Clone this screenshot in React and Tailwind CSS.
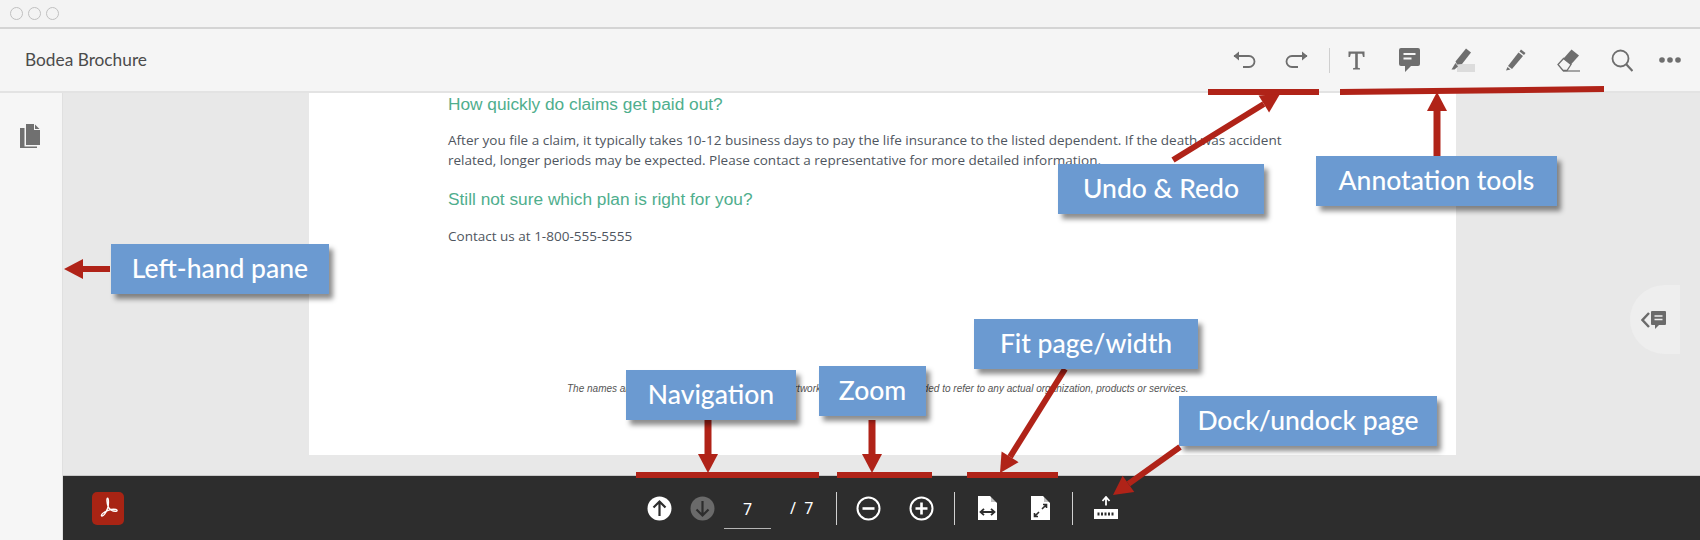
const Arrow = ({ x1, y1, x2, y2, w = 7, head = 19, half = 10 }) => {
  const len = Math.hypot(x2 - x1, y2 - y1)
  const ux = (x2 - x1) / len
  const uy = (y2 - y1) / len
  const bx = x2 - ux * head
  const by = y2 - uy * head
  const pts = [
    [x2, y2],
    [bx - uy * half, by + ux * half],
    [bx + uy * half, by - ux * half],
  ]
  return (
    <g>
      <line x1={x1} y1={y1} x2={bx} y2={by} stroke="#b02318" strokeWidth={w} />
      <polygon points={pts.map((p) => p.join(",")).join(" ")} fill="#b02318" />
    </g>
  )
}

const Label = ({ children, className }) => (
  <div className={"absolute flex h-[50px] items-center justify-center bg-[#6b9ad1] font-['Lato','Open_Sans',sans-serif] text-[26.500px] font-medium text-white shadow-[4px_5px_5px_rgba(0,0,0,0.45)] " + className}>
    {children}
  </div>
)

const Cell = ({ children, className = "w-[53px]" }) => (
  <div className={"flex items-center justify-center " + className}>{children}</div>
)

const Toolbar = () => (
  <div className="flex h-[64px] items-center justify-between border-b-2 border-[#e3e3e3] bg-[#f5f5f5] pl-[25px] pr-[9px]">
    <span className="font-['Lato',sans-serif] text-[17.300px] text-[#4b4b4b]">Bodea Brochure</span>
    <div className="flex items-center text-[#6e6e6e]">
      <Cell>
        <svg width="24" height="18" viewBox="0 0 24 18" fill="none" stroke="currentColor" strokeWidth="1.800">
          <path d="M2 5h15a5 5 0 0 1 0 11h-6" />
          <path d="M7 0.500 1.500 5 7 9.500z" fill="currentColor" stroke="none" />
        </svg>
      </Cell>
      <Cell>
        <svg width="24" height="18" viewBox="0 0 24 18" fill="none" stroke="currentColor" strokeWidth="1.800">
          <path d="M22 5H7a5 5 0 0 0 0 11h6" />
          <path d="M17 0.500 22.500 5 17 9.500z" fill="currentColor" stroke="none" />
        </svg>
      </Cell>
      <div className="ml-[6px] h-[25px] w-px bg-[#cfcfcf]" />
      <Cell>
        <svg width="17" height="19" viewBox="0 0 17 19" fill="currentColor">
          <path d="M0.500 0.500h16V6h-1.500l-.8-3.300H9.800v14l2.200.6v1.200H5v-1.200l2.200-.6v-14H2.800L2 6H.5z" />
        </svg>
      </Cell>
      <Cell>
        <svg width="21" height="24" viewBox="0 0 21 24">
          <path d="M2 0h17a2 2 0 0 1 2 2v14a2 2 0 0 1-2 2h-7l-6 6v-6H2a2 2 0 0 1-2-2V2a2 2 0 0 1 2-2z" fill="currentColor" />
          <path d="M4.500 6h12M4.500 10.500h8" stroke="#f5f5f5" strokeWidth="2" />
        </svg>
      </Cell>
      <Cell>
        <svg width="24" height="24" viewBox="0 0 24 24">
          <rect x="6" y="16" width="18" height="8" fill="#dcdcdc" />
          <path d="M15 0.500 20 4.500 11 16 6 16.500 4.500 13.500z" fill="currentColor" />
          <path d="M4.500 15 7 18.500 3.500 21.500H0.500z" fill="currentColor" />
        </svg>
      </Cell>
      <Cell>
        <svg width="21" height="22" viewBox="0 0 21 22">
          <path d="M16 0.500 20.500 4 19 6 14.500 2.500z" fill="currentColor" />
          <path d="M13.500 3.500 18 7 7 20 3 17z" fill="currentColor" />
          <path d="M2.500 18 5.500 20.500 1 21.500z" fill="currentColor" />
        </svg>
      </Cell>
      <Cell>
        <svg width="23" height="23" viewBox="0 0 23 23">
          <path d="M14.500 0.500 22 6.500 14 15.500 6.500 9.500z" fill="currentColor" />
          <path d="M6.500 9.500 1 15.500 6 21.500h4l4-6z" fill="none" stroke="currentColor" strokeWidth="1.300" />
          <path d="M6 22h17" stroke="currentColor" strokeWidth="1.200" />
        </svg>
      </Cell>
      <Cell>
        <svg width="22" height="23" viewBox="0 0 22 23" fill="none" stroke="currentColor">
          <circle cx="9.500" cy="9.500" r="8" strokeWidth="1.800" />
          <path d="M15 15l6.500 7" strokeWidth="2.200" />
        </svg>
      </Cell>
      <Cell className="w-[43px]">
        <svg width="22" height="6" viewBox="0 0 22 6" fill="currentColor">
          <circle cx="3" cy="3" r="2.800" />
          <circle cx="11" cy="3" r="2.800" />
          <circle cx="19" cy="3" r="2.800" />
        </svg>
      </Cell>
    </div>
  </div>
)

const PageBody = () => (
  <div className="ml-[246px] h-[362px] w-[1147px] bg-white pl-[139px] pt-px">
    <h2 className="font-['Liberation_Sans',sans-serif] text-[17.300px] leading-[20px] text-[#4fae8d]">How quickly do claims get paid out?</h2>
    <p className="mt-[16px] w-[850px] font-['Open_Sans',sans-serif] text-[13.530px] leading-[20px] text-[#4f5660]">
      After you file a claim, it typically takes 10-12 business days to pay the life insurance to the listed dependent. If the death was accident related, longer periods may be expected. Please contact a representative for more detailed information.
    </p>
    <h2 className="mt-[19px] font-['Liberation_Sans',sans-serif] text-[17.300px] leading-[20px] text-[#4fae8d]">Still not sure which plan is right for you?</h2>
    <p className="mt-[17px] font-['Open_Sans',sans-serif] text-[13.530px] leading-[20px] text-[#4f5660]">Contact us at 1-800-555-5555</p>
    <p className="ml-[119px] mt-[137px] font-['Liberation_Sans',sans-serif] text-[10px] italic leading-[12px] text-[#555555]">
      The names and logos of firms used in the sample artwork are invented, not intended to refer to any actual organization, products or services.
    </p>
  </div>
)

const CircleBtn = ({ children, className = "" }) => (
  <svg width="25" height="25" viewBox="0 0 25 25" className={className}>
    {children}
  </svg>
)

const BottomBar = () => (
  <div className="flex h-[65px] items-center border-t border-[#c8c8c8] bg-[#2d2d2d] pl-[29px] text-white">
    <div className="flex h-[33px] w-[32px] items-center justify-center rounded-[5px] bg-[#a82414]">
      <svg width="24" height="24" viewBox="0 0 32 32" fill="none" stroke="#ffffff" strokeWidth="1.800">
        <path d="M15.500 3c-1.500 0-1 6 .5 10.500s4 6.500 10 7c2.500.2 3-1.800.5-2.500-3.500-1-9.500.5-14.500 3-3.500 1.800-5.500 5-4.500 5.500 2.500 1.200 6-5 8-10 1.500-4 1.500-13.500 0-13.500z" />
      </svg>
    </div>
    <CircleBtn className="ml-[523px]">
      <circle cx="12.500" cy="12.500" r="12" fill="#ffffff" />
      <path d="M12.500 20V6M6.500 11.500l6-6 6 6" fill="none" stroke="#2d2d2d" strokeWidth="2.200" />
    </CircleBtn>
    <CircleBtn className="ml-[18px]">
      <circle cx="12.500" cy="12.500" r="12" fill="#6a6a6a" />
      <path d="M12.500 5v14M6.500 13.500l6 6 6-6" fill="none" stroke="#2d2d2d" strokeWidth="2.200" />
    </CircleBtn>
    <div className="ml-[9px] mt-[3px] flex h-[38px] w-[47px] items-center justify-center border-b border-[#b5b5b5] font-['Noto_Sans',sans-serif] text-[16px]">7</div>
    <span className="ml-[19px] whitespace-pre font-['Noto_Sans',sans-serif] text-[16px]">/  7</span>
    <div className="ml-[23px] h-[33px] w-px bg-[#d0d0d0]" />
    <CircleBtn className="ml-[19px]">
      <circle cx="12.500" cy="12.500" r="11" fill="none" stroke="#ffffff" strokeWidth="2" />
      <path d="M6.500 12.500h12" stroke="#ffffff" strokeWidth="2.600" />
    </CircleBtn>
    <CircleBtn className="ml-[28px]">
      <circle cx="12.500" cy="12.500" r="11" fill="none" stroke="#ffffff" strokeWidth="2" />
      <path d="M6.500 12.500h12M12.500 6.500v12" stroke="#ffffff" strokeWidth="2.600" />
    </CircleBtn>
    <div className="ml-[20px] h-[33px] w-px bg-[#d0d0d0]" />
    <svg width="19" height="24" viewBox="0 0 19 24" className="ml-[23px]">
      <path d="M0 0h12l7 7v17H0z" fill="#ffffff" />
      <path d="M13 0l6 6h-6z" fill="#2d2d2d" opacity="0.3" />
      <path d="M2.500 16h14M6 12.800 2.500 16 6 19.200M13 12.800l3.500 3.200-3.500 3.200" fill="none" stroke="#2d2d2d" strokeWidth="1.800" />
    </svg>
    <svg width="19" height="24" viewBox="0 0 19 24" className="ml-[34px]">
      <path d="M0 0h12l7 7v17H0z" fill="#ffffff" />
      <path d="M13 0l6 6h-6z" fill="#2d2d2d" opacity="0.3" />
      <path d="M3.500 20.500 8 16M3.500 17v3.500H7M11 13l4.500-4.500M12 8.500h3.500V12" fill="none" stroke="#2d2d2d" strokeWidth="1.600" />
    </svg>
    <div className="ml-[22px] h-[33px] w-px bg-[#d0d0d0]" />
    <svg width="24" height="24" viewBox="0 0 24 24" className="ml-[21px]">
      <path d="M12 9.500V2M8.500 5 12 1l3.500 4" fill="none" stroke="#ffffff" strokeWidth="1.800" />
      <rect x="0" y="13" width="24" height="10" fill="#ffffff" />
      <path d="M3.500 18h17" stroke="#2d2d2d" strokeWidth="3" strokeDasharray="2 1.500" />
    </svg>
  </div>
)

const App = () => {
  return (
    <div className="relative h-[540px] w-[1700px] overflow-hidden bg-[#f5f5f5]">
      <div className="flex h-[29px] items-center gap-[5px] border-b-2 border-[#d4d4d4] bg-[#f3f3f3] pl-[10px]">
        <span className="h-[13px] w-[13px] rounded-full border border-[#c0c0c0]" />
        <span className="h-[13px] w-[13px] rounded-full border border-[#c0c0c0]" />
        <span className="h-[13px] w-[13px] rounded-full border border-[#c0c0c0]" />
      </div>
      <Toolbar />
      <div className="flex h-[447px]">
        <div className="w-[63px] border-r border-[#e0e0e0] bg-[#f6f6f6] pl-[20px] pt-[31px]">
          <svg width="20" height="24" viewBox="0 0 20 24" fill="#707070">
            <path d="M6 0h8v6h6v15H6z" />
            <path d="M15 0.500 19.500 5H15z" />
            <path d="M0 4h4.500v18.500H17V24H0z" />
          </svg>
        </div>
        <div className="flex min-w-0 flex-1 flex-col">
          <div className="relative flex-1 bg-[#e8e8e8]">
            <PageBody />
            <div className="absolute left-[1567px] top-[192px] flex h-[69px] w-[50px] items-center gap-[1px] rounded-l-full bg-[#eeeeee] pl-[11px]">
              <svg width="9" height="16" viewBox="0 0 9 16" fill="none" stroke="#6a6a6a" strokeWidth="2.400">
                <path d="M8 1 1.500 8 8 15" />
              </svg>
              <svg width="15" height="18" viewBox="0 0 15 18">
                <path d="M1 0h13a1 1 0 0 1 1 1v12a1 1 0 0 1-1 1H8l-4 4v-4H1a1 1 0 0 1-1-1V1a1 1 0 0 1 1-1z" fill="#6a6a6a" />
                <path d="M3.500 5h8M3.500 8.500h8" stroke="#eeeeee" strokeWidth="1.500" />
              </svg>
            </div>
          </div>
          <BottomBar />
        </div>
      </div>

      {/* callouts drawn on top of the screenshot */}
      <svg width="1700" height="540" className="absolute left-0 top-0">
        <rect x="1208" y="89" width="111" height="6" fill="#b02318" />
        <polygon points="1340,89 1604,86 1604,92 1340,95" fill="#b02318" />
        <rect x="636" y="472" width="183" height="6" fill="#b02318" />
        <rect x="837" y="472" width="95" height="6" fill="#b02318" />
        <rect x="967" y="472" width="91" height="6" fill="#b02318" />
        <Arrow x1={1173} y1={160} x2={1280} y2={94} w={6} />
        <Arrow x1={1437} y1={159} x2={1437} y2={92} />
        <Arrow x1={110} y1={269} x2={64} y2={269} w={6} />
        <Arrow x1={708} y1={420} x2={708} y2={473} />
        <Arrow x1={872} y1={420} x2={872} y2={473} />
        <Arrow x1={1065} y1={369} x2={1000} y2={473} w={6} />
        <Arrow x1={1180} y1={447} x2={1113} y2={495} w={6} />
      </svg>
      <Label className="left-[111px] top-[244px] w-[218px]">Left-hand pane</Label>
      <Label className="left-[1058px] top-[164px] w-[206px]">Undo &amp; Redo</Label>
      <Label className="left-[1316px] top-[156px] w-[241px]">Annotation tools</Label>
      <Label className="left-[626px] top-[370px] w-[170px]">Navigation</Label>
      <Label className="left-[819px] top-[366px] w-[107px]">Zoom</Label>
      <Label className="left-[974px] top-[319px] w-[224px]">Fit page/width</Label>
      <Label className="left-[1179px] top-[396px] w-[258px]">Dock/undock page</Label>
    </div>
  )
}

export default App
